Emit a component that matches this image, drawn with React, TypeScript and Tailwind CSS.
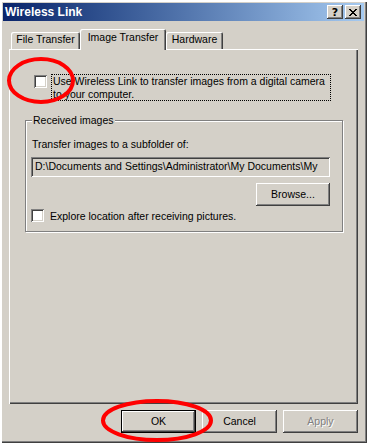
import React from "react";

const raisedBtn =
  "shadow-[inset_-1px_-1px_#404040,inset_1px_1px_#ffffff,inset_-2px_-2px_#808080]";
const sunken =
  "shadow-[inset_1px_1px_#808080,inset_-1px_-1px_#ffffff,inset_2px_2px_#404040,inset_-2px_-2px_#d4d0c8]";

function XIcon() {
  const rows = [0, 1, 2, 3, 4, 5, 6];
  return (
    <svg width="8" height="7" viewBox="0 0 8 7" shapeRendering="crispEdges">
      {rows.map((r) => (
        <g key={r}>
          <rect x={r} y={r} width="2" height="1" fill="#000" />
          <rect x={6 - r} y={r} width="2" height="1" fill="#000" />
        </g>
      ))}
    </svg>
  );
}

function TitleBtn({ children }: { children: React.ReactNode }) {
  return (
    <div
      className={`w-[16px] h-[14px] bg-[#d4d0c8] flex items-center justify-center ${raisedBtn}`}
    >
      {children}
    </div>
  );
}

function Checkbox() {
  return <div className={`w-[13px] h-[13px] shrink-0 bg-white ${sunken}`} />;
}

function Button({
  children,
  isDefault,
  disabled,
}: {
  children: React.ReactNode;
  isDefault?: boolean;
  disabled?: boolean;
}) {
  const shadow = isDefault
    ? "shadow-[inset_0_0_0_1px_#000000,inset_-2px_-2px_#404040,inset_2px_2px_#ffffff,inset_-3px_-3px_#808080]"
    : raisedBtn;
  return (
    <div
      className={`w-[75px] h-[23px] bg-[#d4d0c8] flex items-center justify-center ${shadow} ${
        disabled ? "text-[#808080] [text-shadow:1px_1px_0_#ffffff]" : ""
      }`}
    >
      {children}
    </div>
  );
}

export default function App() {
  return (
    <div className="relative w-[367px] h-[443px] bg-[#d4d0c8] p-[3px] flex flex-col font-['Liberation_Sans',Arial,sans-serif] text-[10.5px] leading-[13px] text-black shadow-[inset_2px_2px_#ffffff,inset_-1px_-1px_#404040,inset_-2px_-2px_#808080] overflow-hidden">
      {/* Title bar */}
      <div className="h-[18px] shrink-0 flex items-center bg-linear-to-r from-[#0a246a] to-[#a6caf0] pl-[2px] pr-[3px]">
        <span className="text-white font-bold text-[12px]">Wireless Link</span>
        <div className="ml-auto flex gap-[2px]">
          <TitleBtn>
            <span className="font-bold text-[11px] leading-[11px] font-['DejaVu_Sans',sans-serif]">?</span>
          </TitleBtn>
          <TitleBtn>
            <XIcon />
          </TitleBtn>
        </div>
      </div>

      {/* Content */}
      <div className="flex-1 flex flex-col px-[6px] pt-[8px]">
        {/* Tabs */}
        <div className="relative z-10 h-[21px] -mb-px flex items-start pl-[2px]">
          <div className="w-[69px] h-[17px] mt-[3px] rounded-t-[2px] pt-[1px] text-center shadow-[inset_1px_1px_#ffffff,inset_-1px_0_#404040,inset_-2px_0_#808080]">
            File Transfer
          </div>
          <div className="w-[86px] h-[21px] bg-[#d4d0c8] rounded-t-[2px] pt-[2px] text-center shadow-[inset_1px_1px_#ffffff,inset_-1px_0_#404040,inset_-2px_0_#808080]">
            Image Transfer
          </div>
          <div className="w-[57px] h-[17px] mt-[3px] rounded-t-[2px] pt-[1px] text-center shadow-[inset_1px_1px_#ffffff,inset_-1px_0_#404040,inset_-2px_0_#808080]">
            Hardware
          </div>
        </div>

        {/* Panel */}
        <div className="h-[355px] shrink-0 flex flex-col shadow-[inset_1px_1px_#ffffff,inset_-1px_-1px_#404040,inset_-2px_-2px_#808080]">
          <div className="flex mt-[25px] ml-[25px]">
            <div className="mt-[1px]">
              <Checkbox />
            </div>
            <div className="ml-[4px] w-[280px] h-[27px] border border-dotted border-black pl-[1px] whitespace-nowrap">
              Use Wireless Link to transfer images from a digital camera
              <br />
              to your computer.
            </div>
          </div>

          {/* Group box */}
          <div className="relative ml-[16px] mt-[19px] w-[318px] h-[112px] border border-[#808080] shadow-[inset_1px_1px_#ffffff,1px_1px_#ffffff] flex flex-col pl-[5px] pt-[17px]">
            <div className="absolute left-[6px] top-[-7px] px-[1px] bg-[#d4d0c8]">
              Received images
            </div>
            <div className="ml-[1px]">Transfer images to a subfolder of:</div>
            <div
              className={`mt-[6px] w-[299px] h-[20px] bg-[#d4d0c8] pl-[4px] pt-[3px] overflow-hidden whitespace-nowrap ${sunken}`}
            >
              D:\Documents and Settings\Administrator\My Documents\My
            </div>
            <div className="w-[299px] flex justify-end mt-[6px]">
              <div className={`w-[74px] h-[23px] bg-[#d4d0c8] flex items-center justify-center ${raisedBtn}`}>
                Browse...
              </div>
            </div>
            <div className="flex mt-[3px]">
              <Checkbox />
              <span className="ml-[6px] mt-[1px]">Explore location after receiving pictures.</span>
            </div>
          </div>
        </div>

        {/* Buttons */}
        <div className="mt-[6px] h-[23px] flex justify-end gap-[6px]">
          <Button isDefault>OK</Button>
          <Button>Cancel</Button>
          <Button disabled>Apply</Button>
        </div>
      </div>

      {/* Red annotations */}
      <svg className="absolute left-0 top-0 pointer-events-none" width="367" height="443">
        <ellipse cx="41" cy="80.5" rx="32" ry="21.5" fill="none" stroke="#ff0000" strokeWidth="4" />
        <ellipse cx="157" cy="420.5" rx="54" ry="19.5" fill="none" stroke="#ff0000" strokeWidth="4" />
      </svg>
    </div>
  );
}
